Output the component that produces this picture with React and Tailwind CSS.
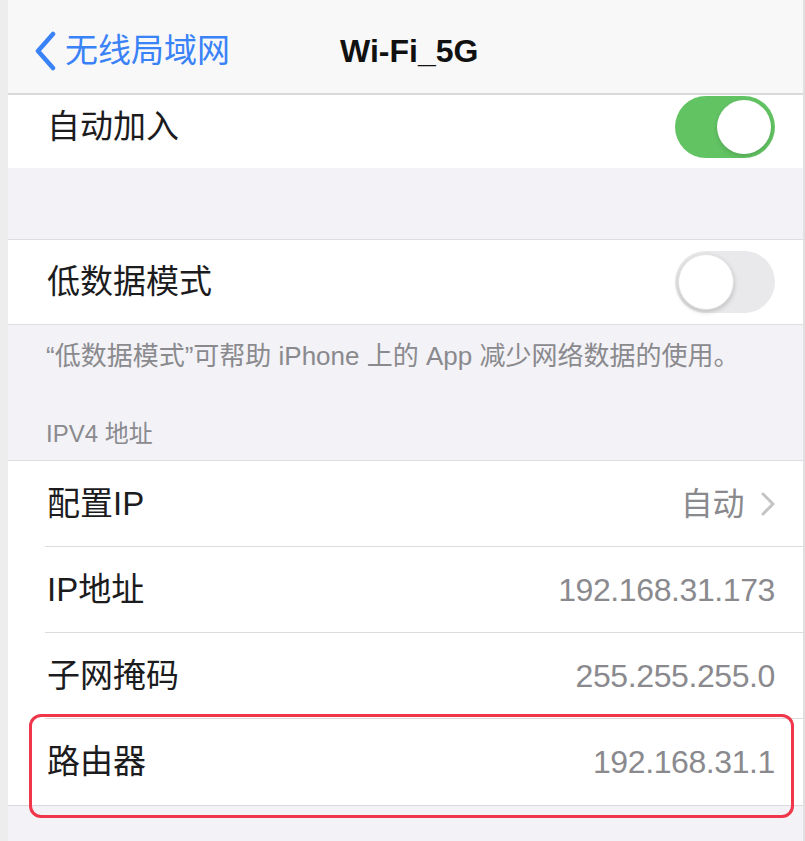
import React from "react";

const font = { fontFamily: '"Liberation Sans", "Noto Sans CJK SC", sans-serif' };

function Toggle({ on }) {
  if (on) {
    return (
      <div className="w-[100px] h-[62px] rounded-full bg-[#62c363] flex items-center justify-end pr-[4px]">
        <div className="w-[54px] h-[54px] rounded-full bg-white shadow-[0_2px_4px_rgba(0,0,0,0.15)]" />
      </div>
    );
  }
  return (
    <div className="w-[100px] h-[62px] rounded-full bg-[#e9e9eb] flex items-center pl-[3px]">
      <div className="w-[56px] h-[56px] rounded-full bg-white shadow-[0_2px_5px_rgba(0,0,0,0.2)] border border-[#e2e2e2]" />
    </div>
  );
}

function Row({ label, value, chevron, last }) {
  return (
    <div className="h-[86px] flex">
      <div className={`flex-1 ml-[37px] flex items-center justify-between pr-[28px] ${last ? "" : "border-b border-[#dcdcde]"}`}>
        <span className="text-[33px] text-[#1c1c1e] ml-[2px]">{label}</span>
        <span className="flex items-center gap-[17px] text-[32px] text-[#8a8a8e] tracking-[-0.4px]">
          {value}
          {chevron && (
            <svg width="14" height="24" viewBox="0 0 14 24" fill="none">
              <path d="M2 2 L12 12 L2 22" stroke="#c4c4c7" strokeWidth="3" strokeLinecap="round" strokeLinejoin="round" />
            </svg>
          )}
        </span>
      </div>
    </div>
  );
}

export default function App() {
  return (
    <div className="w-[805px] h-[841px] bg-[#ededed] pl-[8px] overflow-hidden" style={font}>
      <div className="h-full bg-[#f2f2f7] flex flex-col border-r-2 border-[#e0e0e0]">
        {/* nav */}
        <div className="h-[95px] shrink-0 bg-[#f8f8f8] border-b-2 border-[#dadada] flex items-center pt-[8px]">
          <div className="flex items-center ml-[25px] text-[#3a82f7]">
            <svg width="24" height="40" viewBox="0 0 24 40" fill="none">
              <path d="M20 3 L5 20 L20 37" stroke="#3a82f7" strokeWidth="4.5" strokeLinecap="round" strokeLinejoin="round" />
            </svg>
            <span className="text-[33px] ml-[8px]">无线局域网</span>
          </div>
          <span className="ml-[110px] text-[32px] font-bold text-[#111]">Wi-Fi_5G</span>
        </div>

        <div className="h-[73px] shrink-0 bg-white flex items-center justify-between pl-[39px] pr-[28px] pb-[10px]">
          <span className="text-[33px] text-[#1c1c1e]">自动加入</span>
          <Toggle on />
        </div>

        <div className="h-[72px] shrink-0 border-b border-[#dedee2]" />

        <div className="h-[85px] shrink-0 bg-white flex items-center justify-between pl-[39px] pr-[28px] border-b border-[#dedee2]">
          <span className="text-[33px] text-[#1c1c1e]">低数据模式</span>
          <Toggle />
        </div>

        <div className="h-[136px] shrink-0 flex flex-col pl-[38px] border-b border-[#dedee2]">
          <p className="mt-[12px] text-[26px] text-[#8a8a8e]">“低数据模式”可帮助 iPhone 上的 App 减少网络数据的使用。</p>
          <p className="mt-[40px] text-[24px] text-[#8a8a8e]">IPV4 地址</p>
        </div>

        <div className="shrink-0 bg-white border-b border-[#dadadd]">
          <Row label="配置IP" value="自动" chevron />
          <Row label="IP地址" value="192.168.31.173" />
          <Row label="子网掩码" value="255.255.255.0" />
          <div className="relative">
            <Row label="路由器" value="192.168.31.1" last />
            <div className="absolute top-[-5px] bottom-[-13px] left-[21px] right-[9px] border-[3px] border-[#f0364a] rounded-[12px]" />
          </div>
        </div>

        <div className="flex-1" />
      </div>
    </div>
  );
}
